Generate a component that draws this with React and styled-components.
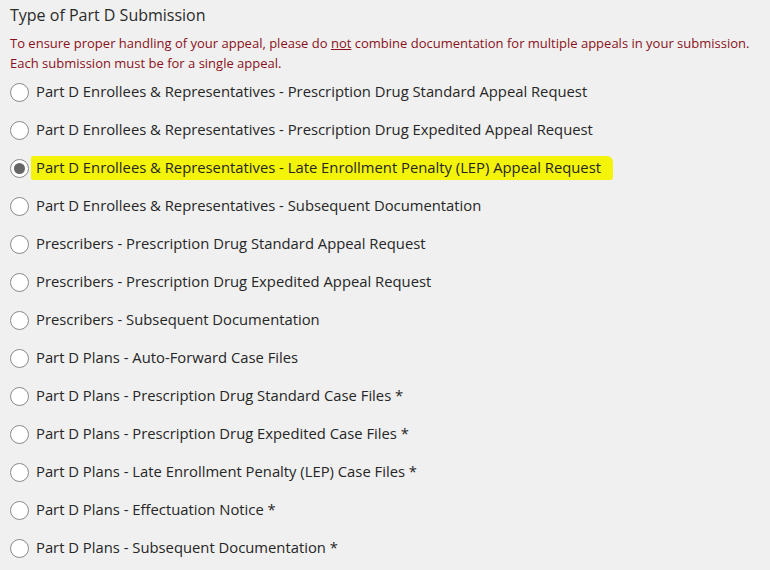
import styled, { createGlobalStyle } from "styled-components";

const options = [
    "Part D Enrollees & Representatives - Prescription Drug Standard Appeal Request",
    "Part D Enrollees & Representatives - Prescription Drug Expedited Appeal Request",
    "Part D Enrollees & Representatives - Late Enrollment Penalty (LEP) Appeal Request",
    "Part D Enrollees & Representatives - Subsequent Documentation",
    "Prescribers - Prescription Drug Standard Appeal Request",
    "Prescribers - Prescription Drug Expedited Appeal Request",
    "Prescribers - Subsequent Documentation",
    "Part D Plans - Auto-Forward Case Files",
    "Part D Plans - Prescription Drug Standard Case Files *",
    "Part D Plans - Prescription Drug Expedited Case Files *",
    "Part D Plans - Late Enrollment Penalty (LEP) Case Files *",
    "Part D Plans - Effectuation Notice *",
    "Part D Plans - Subsequent Documentation *",
];

const selected = 2;

export default function App(){
    return(
        <>
            <GlobalStyle />
            <Page>
                <Title>Type of Part D Submission</Title>
                <Note>
                    To ensure proper handling of your appeal, please do <u>not</u> combine documentation for multiple appeals in your submission.
                    <br />Each submission must be for a single appeal.
                </Note>
                <List>
                    {options.map((label, i) => (
                        <Row key={label}>
                            <Radio checked={i === selected} />
                            <Label highlight={i === selected ? 1 : 0}>{label}</Label>
                        </Row>
                    ))}
                </List>
            </Page>
        </>
    );
}

const GlobalStyle = createGlobalStyle`
    html, body{
        margin: 0;
        padding: 0;
        background: #f0f0f0;
    }
    body{
        font-family: "Open Sans", "Noto Sans", sans-serif;
        color: #333;
    }
`

const Page = styled.div`
    width: 770px;
    height: 570px;
    overflow: hidden;
    background: #f0f0f0;
    padding: 3px 0 0 10px;
    box-sizing: border-box;
`

const Title = styled.h2`
    margin: 0;
    font-size: 16px;
    font-weight: 400;
    color: #2b2b2b;
    line-height: 24px;
`

const Note = styled.p`
    margin: 6px 0 0 0;
    font-size: 13px;
    line-height: 20px;
    color: #8a1020;
`

const List = styled.div`
    display: flex;
    flex-direction: column;
`

const Row = styled.label`
    display: flex;
    align-items: center;
    height: 38px;
`

const Radio = styled.span`
    width: 19px;
    height: 19px;
    border-radius: 50%;
    border: 1.5px solid #8a8a8a;
    background: #fff;
    box-sizing: border-box;
    flex-shrink: 0;
    display: flex;
    align-items: center;
    justify-content: center;

    &::after{
        content: "";
        width: 11px;
        height: 11px;
        border-radius: 50%;
        background: #666;
        display: ${({checked}) => checked ? 'block' : 'none'};
    }
`

const Label = styled.span`
    font-size: 14.8px;
    color: #262626;
    padding: 1px 12px 3px 5px;
    margin-left: 2px;
    background: ${({highlight}) => highlight ? '#f4f40a' : 'transparent'};
    border-radius: 2px 6px 3px 2px;
`
